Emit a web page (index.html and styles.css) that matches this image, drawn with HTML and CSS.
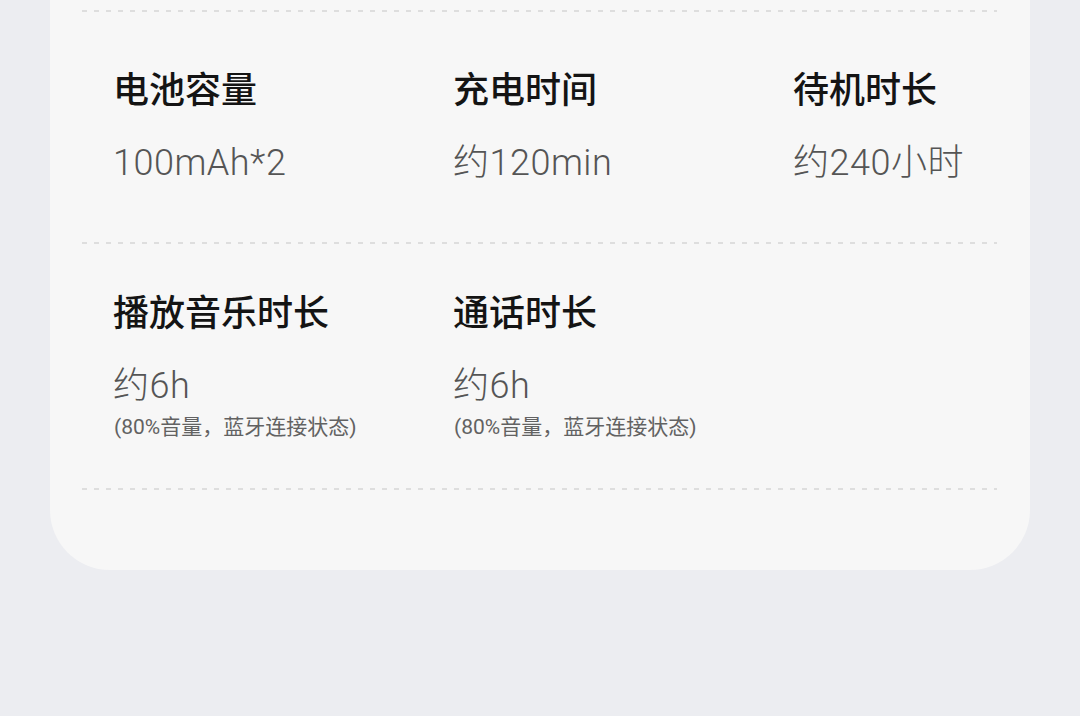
FILE: index.html
```html
<!DOCTYPE html>
<html lang="zh-CN">
<head>
	<meta charset="UTF-8">
	<title>续航参数</title>
	<link rel="stylesheet" href="styles.css">
</head>
<body>

<div class="page">
	<div class="card">
		<div class="line"></div>
		<ul class="spec_row first">
			<li>
				<h3>电池容量</h3>
				<p class="val">100mAh*2</p>
			</li>
			<li>
				<h3>充电时间</h3>
				<p class="val">约120min</p>
			</li>
			<li>
				<h3>待机时长</h3>
				<p class="val">约240小时</p>
			</li>
		</ul>
		<div class="line"></div>
		<ul class="spec_row second">
			<li>
				<h3>播放音乐时长</h3>
				<p class="val">约6h</p>
				<p class="note">(80%音量，蓝牙连接状态)</p>
			</li>
			<li>
				<h3>通话时长</h3>
				<p class="val">约6h</p>
				<p class="note">(80%音量，蓝牙连接状态)</p>
			</li>
			<li></li>
		</ul>
		<div class="line"></div>
	</div>
</div>

</body>
</html>
```

FILE: styles.css
```css
*{
	margin: 0;
	padding: 0;
}
li{
	list-style: none;
}
html, body{
	height: 100%;
}
body{
	background: #ecedf1;
	font-family: Roboto, "Noto Sans CJK SC", sans-serif;
	overflow: hidden;
}

.page{
	padding: 0 50px;
}
.card{
	background: #f7f7f7;
	border-radius: 0 0 60px 60px;
	padding: 10px 33px 80px 32px;
}

/* 虚线分隔 */
.line{
	height: 2px;
	background: repeating-linear-gradient(90deg, #dedede 0, #dedede 5px, transparent 5px, transparent 12px);
}

.spec_row{
	display: grid;
	grid-template-columns: 340px 340px 1fr;
	padding-left: 31px;
}
.spec_row.first{
	padding-top: 57px;
	padding-bottom: 61px;
}
.spec_row.second{
	padding-top: 48px;
	padding-bottom: 51px;
}

.spec_row h3{
	font-family: "Noto Sans CJK SC", sans-serif;
	font-size: 36px;
	line-height: 36px;
	font-weight: 500;
	color: #141414;
}
.spec_row .val{
	margin-top: 40px;
	font-size: 36px;
	line-height: 36px;
	font-weight: 300;
	letter-spacing: 0.5px;
	color: #555;
}
.spec_row .note{
	margin-top: 13px;
	margin-left: 1px;
	font-size: 21px;
	line-height: 20px;
	color: #626262;
}
```
